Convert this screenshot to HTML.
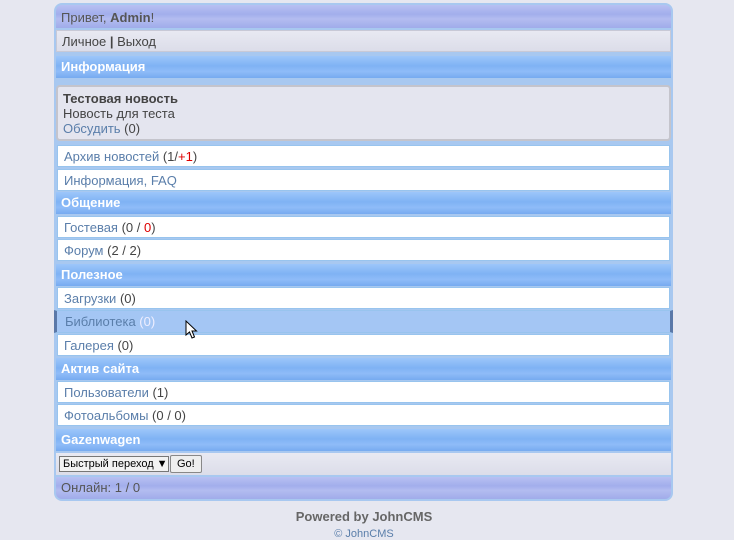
<!DOCTYPE html><html><head><meta charset="utf-8"><style>
body{margin:0;width:734px;height:535px;overflow:hidden;background:#e6e7f0;font-family:"Liberation Sans",sans-serif;font-size:13px;color:#444}
#w{position:absolute;left:54px;top:3px;width:619px;height:498px;background:#a8c8f0;border-radius:8px}
.r{position:absolute;left:2px;width:615px;box-sizing:border-box;padding-left:5px;line-height:21px}
.ph{background:linear-gradient(#b8c0f2,#a2aeec 40%,#b3bcf0 60%,#a0acea);color:#555}
.g{background:linear-gradient(#e8e9f2,#dcdde9);color:#444}
.h{background:linear-gradient(#9cc6fa,#7fb2f4 45%,#8fbcf8 70%,#76aaf0);color:#fff;font-weight:bold;padding-left:5px}
.i{background:#fff;border:1px solid #98c4ee;left:3px;width:613px;padding-left:6px;line-height:20px}
a{color:#5a7eaa;text-decoration:none}
.red{color:#d00}
</style></head><body>
<div id="w">
<div class="r ph" style="top:2px;height:23px;line-height:25px;border-radius:6px 6px 0 0">Привет, <b>Admin</b>!</div>
<div class="r g" style="top:27px;height:22px;line-height:22px;border:1px solid #c8c9d6">Личное <b>|</b> Выход</div>
<div class="r h" style="top:53px;height:22px;line-height:22px">Информация</div>
<div class="r" style="top:82px;height:56px;background:#e4e5ef;border:2px solid #c4c4cc;border-radius:4px;line-height:15px;padding-top:4px;color:#444"><b>Тестовая новость</b><br>Новость для теста<br><a>Обсудить</a> (0)</div>
<div class="r i" style="top:142px;height:22px;line-height:21px"><a>Архив новостей</a> (1/<span class="red">+1</span>)</div>
<div class="r i" style="top:166px;height:22px;line-height:21px"><a>Информация, FAQ</a></div>
<div class="r h" style="top:189px;height:22px">Общение</div>
<div class="r i" style="top:213px;height:22px;line-height:21px"><a>Гостевая</a> (0 / <span class="red">0</span>)</div>
<div class="r i" style="top:236px;height:22px;line-height:21px"><a>Форум</a> (2 / 2)</div>
<div class="r h" style="top:261px;height:22px">Полезное</div>
<div class="r i" style="top:284px;height:22px;line-height:21px"><a>Загрузки</a> (0)</div>
<div class="r i" style="top:307px;height:23px;line-height:22px;background:#a4c6f4;border-left:3px solid #5a78a8;border-right:3px solid #5a78a8;left:0;width:619px;padding-left:8px;color:#eef"><a>Библиотека</a> (0)</div>
<div class="r i" style="top:331px;height:22px;line-height:21px"><a>Галерея</a> (0)</div>
<div class="r h" style="top:355px;height:22px">Актив сайта</div>
<div class="r i" style="top:378px;height:22px;line-height:21px"><a>Пользователи</a> (1)</div>
<div class="r i" style="top:401px;height:22px;line-height:21px"><a>Фотоальбомы</a> (0 / 0)</div>
<div class="r h" style="top:426px;height:22px">Gazenwagen</div>
<div class="r g" style="top:450px;height:22px;padding-left:3px;padding-top:3px"><span style="display:inline-block;font-size:11px;line-height:14px;border:1px solid #777;background:#f2f2f2;padding:0 3px;color:#000;vertical-align:top;width:102px;white-space:nowrap">Быстрый переход ▼</span><span style="display:inline-block;font-size:11px;line-height:16px;border:1px solid #888;border-radius:2px;background:#eee;padding:0 6px;color:#000;vertical-align:top;margin-left:1px;margin-top:-1px">Go!</span></div>
<div class="r ph" style="top:474px;height:22px;line-height:22px;border-radius:0 0 6px 6px">Онлайн: 1 / 0</div>
</div>
<svg style="position:absolute;left:185px;top:320px" width="14" height="20" viewBox="0 0 14 20"><path d="M1 1 L1 15 L4.5 12 L7 18 L9.5 17 L7 11 L11.5 11 Z" fill="#fff" stroke="#000" stroke-width="1"/></svg>
<div style="position:absolute;top:509px;left:0;width:728px;text-align:center;font-weight:bold;color:#666">Powered by JohnCMS</div>
<div style="position:absolute;top:528px;left:0;width:728px;text-align:center;font-size:11px;color:#5a7eaa">© JohnCMS</div>
</body></html>
